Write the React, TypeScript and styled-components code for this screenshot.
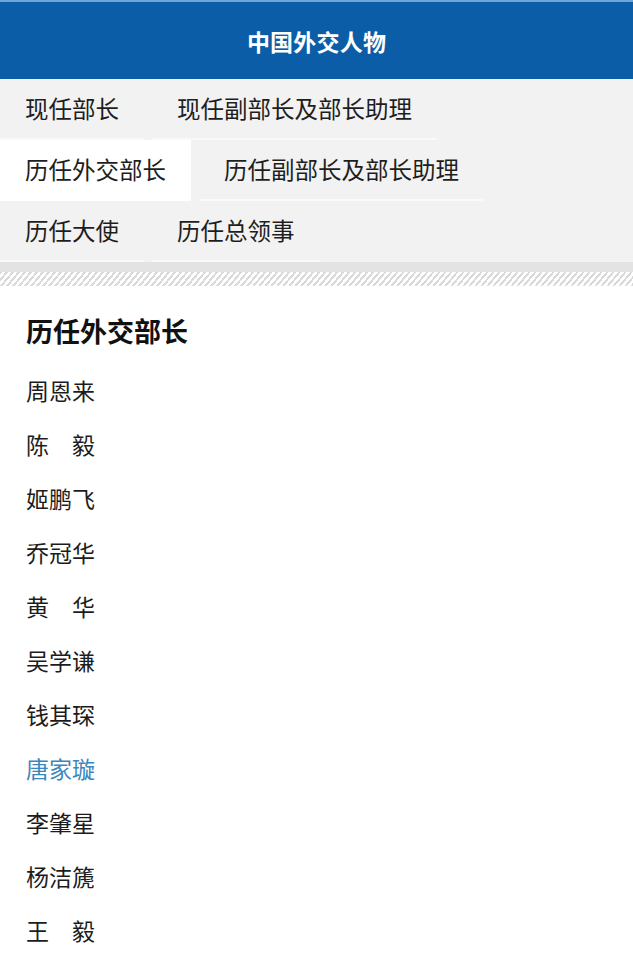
import React from "react";
import styled, { createGlobalStyle } from "styled-components";

const GlobalStyle = createGlobalStyle`
  html, body {
    margin: 0;
    padding: 0;
    background: #ffffff;
  }
  body {
    font-family: "Noto Sans CJK SC", "Noto Sans", sans-serif;
    -webkit-font-smoothing: antialiased;
  }
  * { box-sizing: border-box; }
`;

const Page = styled.div`
  width: 633px;
  min-height: 964px;
  background: #ffffff;
  overflow: hidden;
`;

const Header = styled.header`
  height: 79px;
  background: #0b5da7;
  border-top: 2px solid #6ea7d3;
  display: flex;
  align-items: center;
  justify-content: center;
  color: #ffffff;
  font-size: 23px;
  font-weight: 700;
  letter-spacing: 0.2px;
`;

const Nav = styled.nav`
  background: #f2f2f2;
  display: flex;
  flex-direction: column;
`;

const NavRow = styled.div`
  display: flex;
  gap: 8px;
  height: 61px;
`;

const NavItem = styled.a<{ $active?: boolean }>`
  display: flex;
  align-items: center;
  padding: 0 25px 2px;
  height: 61px;
  font-size: 23.5px;
  color: #1e1e1e;
  text-decoration: none;
  background: ${(p) => (p.$active ? "#ffffff" : "transparent")};
  border-bottom: 2px solid ${(p) => (p.$active ? "#ffffff" : "#f9f9f9")};
  white-space: nowrap;
`;

const Band = styled.div`
  height: 10px;
  background: #e3e3e3;
`;

const Stripes = styled.div`
  height: 14px;
  background-color: #ffffff;
  background-image: repeating-linear-gradient(
    -50deg,
    #d9d9d9 0px,
    #d9d9d9 2px,
    #ffffff 2px,
    #ffffff 4.6px
  );
`;

const Content = styled.section`
  padding: 27px 26px 0;
`;

const Title = styled.h2`
  margin: 0 0 14px;
  font-size: 27px;
  line-height: 36px;
  font-weight: 700;
  color: #111111;
`;

const List = styled.ul`
  list-style: none;
  margin: 0;
  padding: 0;
`;

const Person = styled.li<{ $highlight?: boolean }>`
  height: 54px;
  line-height: 54px;
  font-size: 23px;
  color: ${(p) => (p.$highlight ? "#3a87bd" : "#1c1c1c")};
  white-space: pre;
`;

const navRows: { label: string; active?: boolean }[][] = [
  [{ label: "现任部长" }, { label: "现任副部长及部长助理" }],
  [{ label: "历任外交部长", active: true }, { label: "历任副部长及部长助理" }],
  [{ label: "历任大使" }, { label: "历任总领事" }],
];

const people = [
  "周恩来",
  "陈　毅",
  "姬鹏飞",
  "乔冠华",
  "黄　华",
  "吴学谦",
  "钱其琛",
  "唐家璇",
  "李肇星",
  "杨洁篪",
  "王　毅",
];

export default function App() {
  return (
    <Page>
      <GlobalStyle />
      <Header>中国外交人物</Header>
      <Nav>
        {navRows.map((row, i) => (
          <NavRow key={i}>
            {row.map((item) => (
              <NavItem key={item.label} $active={item.active}>
                {item.label}
              </NavItem>
            ))}
          </NavRow>
        ))}
      </Nav>
      <Band />
      <Stripes />
      <Content>
        <Title>历任外交部长</Title>
        <List>
          {people.map((name) => (
            <Person key={name} $highlight={name === "唐家璇"}>
              {name}
            </Person>
          ))}
        </List>
      </Content>
    </Page>
  );
}
